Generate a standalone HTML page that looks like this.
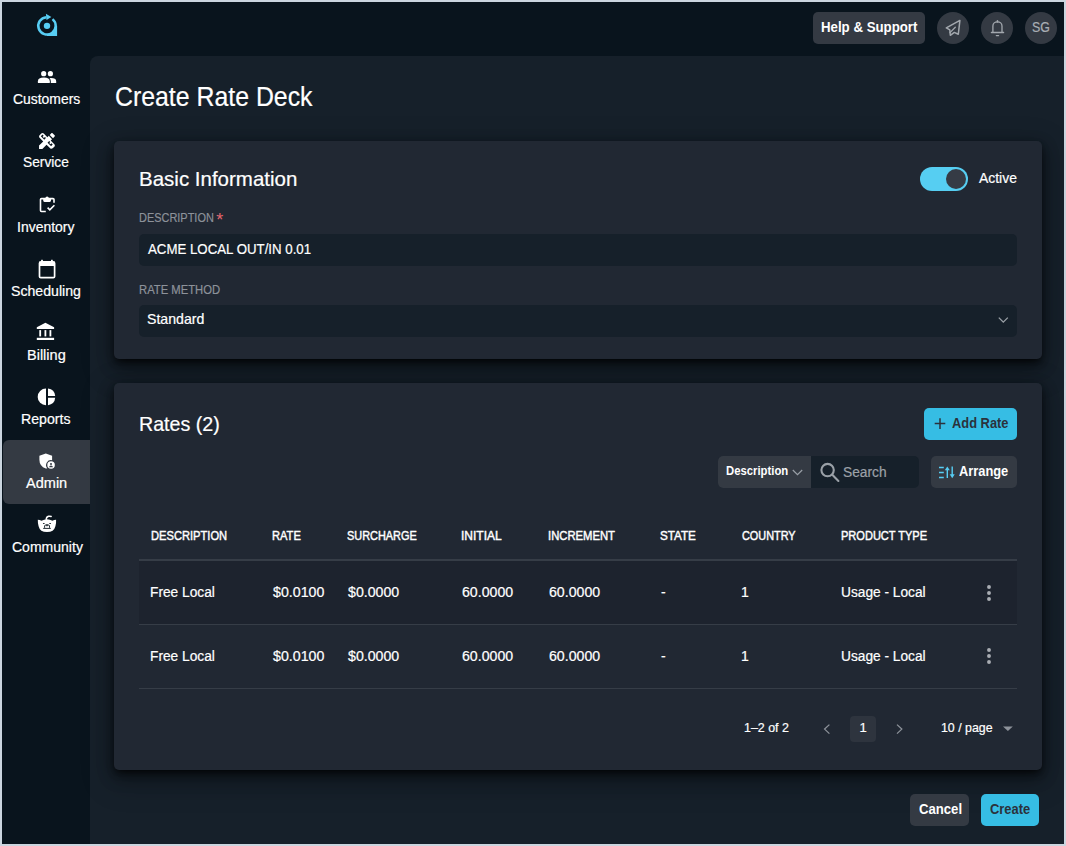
<!DOCTYPE html>
<html><head><meta charset="utf-8">
<style>
*{box-sizing:border-box;margin:0;padding:0}
html,body{width:1066px;height:846px;overflow:hidden;background:#cbd5df;font-family:"Liberation Sans",sans-serif;color:#fff;position:relative}
.r{position:absolute}
.t{position:absolute;white-space:pre;line-height:1;transform-origin:0 0}
svg{position:absolute;overflow:visible}

</style></head><body>
<div class="r" style="left:2px;top:2px;width:1062px;height:842px;background:#09141d"></div>
<div class="r" style="left:90px;top:56px;width:974px;height:788px;background:#16202a;border-top-left-radius:8px"></div>
<!-- sidebar active -->
<div class="r" style="left:3px;top:440px;width:87px;height:64px;background:#343a43;border-radius:6px 0 0 6px"></div>
<!-- top bar -->
<div class="r" style="left:813px;top:12px;width:112px;height:32px;background:#343a43;border-radius:5px"></div>
<div class="r" style="left:937px;top:12px;width:32px;height:32px;background:#343a43;border-radius:50%"></div>
<div class="r" style="left:981px;top:12px;width:32px;height:32px;background:#343a43;border-radius:50%"></div>
<div class="r" style="left:1025px;top:12px;width:32px;height:32px;background:#343a43;border-radius:50%"></div>
<!-- card 1 -->
<div class="r" style="left:114px;top:141px;width:928px;height:218px;background:#212833;border-radius:5px;box-shadow:0 3px 6px -4px rgba(0,0,0,.9),0 4px 8px -2px rgba(0,0,0,.45),0 6px 16px 0 rgba(0,0,0,.45),0 9px 28px 8px rgba(0,0,0,.16)"></div>
<div class="r" style="left:139px;top:234px;width:878px;height:32px;background:#16202a;border-radius:5px"></div>
<div class="r" style="left:139px;top:305px;width:878px;height:32px;background:#16202a;border-radius:5px"></div>
<div class="r" style="left:920px;top:167px;width:48px;height:24px;background:#56cef2;border-radius:12px"></div>
<div class="r" style="left:946px;top:169px;width:20px;height:20px;background:#353b45;border-radius:50%"></div>
<!-- card 2 -->
<div class="r" style="left:114px;top:383px;width:928px;height:387px;background:#212833;border-radius:5px;box-shadow:0 3px 6px -4px rgba(0,0,0,.9),0 4px 8px -2px rgba(0,0,0,.45),0 6px 16px 0 rgba(0,0,0,.45),0 9px 28px 8px rgba(0,0,0,.16)"></div>
<div class="r" style="left:924px;top:408px;width:93px;height:32px;background:#36bde4;border-radius:5px"></div>
<div class="r" style="left:718px;top:456px;width:201px;height:32px;background:#16202a;border-radius:5px;overflow:hidden"><div class="r" style="left:0;top:0;width:93px;height:32px;background:#343a43"></div></div>
<div class="r" style="left:931px;top:456px;width:86px;height:32px;background:#343a43;border-radius:5px"></div>
<div class="r" style="left:139px;top:559px;width:878px;height:2px;background:#363d47"></div>
<div class="r" style="left:139px;top:561px;width:878px;height:63px;background:#1d232e"></div>
<div class="r" style="left:139px;top:624px;width:878px;height:1px;background:#363d47"></div>
<div class="r" style="left:139px;top:688px;width:878px;height:1px;background:#363d47"></div>
<div class="r" style="left:850px;top:716px;width:26px;height:26px;background:#2e343e;border-radius:4px"></div>
<!-- footer buttons -->
<div class="r" style="left:910px;top:794px;width:59px;height:32px;background:#343a43;border-radius:5px"></div>
<div class="r" style="left:981px;top:794px;width:58px;height:32px;background:#36bde4;border-radius:5px"></div>
<svg style="left:0;top:0" width="1066" height="846" viewBox="0 0 1066 846">
<!-- logo -->
<g fill="#57cdf3" stroke="none">
  <path d="M52.5,19.1 A8.7,8.7 0 1,1 46.4,17.15" fill="none" stroke="#57cdf3" stroke-width="2.5"/>
  <path d="M47,36.0 L57.1,36.0 L57.1,25.85 L55.5,25.85 A8.5,8.5 0 0,1 47,34.35 Z"/>
  <path d="M45.9,13.7 L51.4,17.0 L46.5,20.1 Z"/>
  <circle cx="47" cy="25.85" r="3.2"/>
</g>
<!-- top bar icons -->
<g fill="none" stroke="#a3a8ae" stroke-width="1.3" stroke-linejoin="round" stroke-linecap="round">
  <path d="M959.9,20.4 L946.3,27.9 L949.8,29.8 L950.3,35.3 L954.3,32.4 L958.3,34.3 Z" stroke-width="1.5"/>
  <path d="M955.3,27.3 L950.0,32.6"/>
  <path d="M992.9,31.9 V26 A4.55,4.1 0 0,1 1002.0,26 V31.9 M991.4,32.5 H1003.6"/>
  <path d="M997.45,22 V20.8" stroke-width="1.6"/>
  <path d="M996.3,35.6 H998.6" stroke-width="1.2"/>
</g>
<!-- sidebar icons -->
<g fill="#ffffff" stroke="none">
  <!-- customers -->
  <circle cx="43.7" cy="73.7" r="2.6"/>
  <circle cx="50.4" cy="73.7" r="2.6"/>
  <path d="M37.9,83 V81.2 Q37.9,77.6 43.85,77.6 Q49.8,77.6 49.8,81.2 V83 Z"/>
  <path d="M50.8,83 V81.2 Q50.8,79.4 49.5,78.2 Q50.2,78.1 50.9,78.1 Q56.2,78.1 56.2,81.2 V83 Z"/>
  <!-- service: design_services -->
  <g transform="translate(36.4,130.4) scale(0.88)">
   <path d="M16.24 11.51l1.57-1.57-3.75-3.75-1.57 1.56-4.14-4.13c-.78-.78-2.05-.78-2.83 0l-1.9 1.9c-.78.78-.78 2.05 0 2.83l4.13 4.13L3 17.25V21h3.75l4.76-4.76 4.13 4.13c.95.95 2.23.6 2.83 0l1.9-1.9c.78-.78.78-2.05 0-2.83l-4.13-4.13zm-7-.6L5.04 6.7 6.95 4.79l1.33 1.32-1.18 1.19 1.41 1.41 1.19-1.19 1.2 1.2-1.65 1.39zm7.55 7.17l-4.13-4.13 1.9-1.9 1.2 1.2-1.19 1.19 1.41 1.41 1.19-1.19 1.32 1.32-1.9 1.9zM20.71 7.04a.996.996 0 000-1.41l-2.34-2.34c-.47-.47-1.12-.29-1.41 0l-1.83 1.83 3.75 3.75 1.83-1.83z"/>
  </g>
  <!-- inventory -->
  <path d="M54.0,202.8 V199.6 Q54,198.6 53,198.6 H41.5 Q40.5,198.6 40.5,199.6 V210.5 Q40.5,211.5 41.5,211.5 H45.8" fill="none" stroke="#fff" stroke-width="1.6"/>
  <path d="M43.2,198.2 H45.4 A1.7,1.7 0 0,1 48.8,198.2 H51 V200.6 Q51,201.9 49.7,201.9 H44.5 Q43.2,201.9 43.2,200.6 Z"/>
  <path d="M47.6,207.6 L49.8,209.8 L54.4,205.2" fill="none" stroke="#fff" stroke-width="1.6"/>
  <!-- scheduling -->
  <path d="M39.5,263.3 Q39.5,261.8 41,261.8 H53.1 Q54.6,261.8 54.6,263.3 V276.5 Q54.6,277.6 53.3,277.6 H40.8 Q39.5,277.6 39.5,276.5 Z" fill="none" stroke="#fff" stroke-width="1.7"/>
  <rect x="39" y="261.8" width="16" height="4.2"/>
  <rect x="41.1" y="259.8" width="1.8" height="2.5"/>
  <rect x="51.0" y="259.8" width="1.8" height="2.5"/>
  <!-- billing -->
  <path d="M45.4,322.8 L54.1,327.3 V329.1 H36.8 V327.3 Z"/>
  <rect x="39.3" y="330.1" width="1.8" height="6.3"/>
  <rect x="44.5" y="330.1" width="1.8" height="6.3"/>
  <rect x="49.5" y="330.1" width="1.8" height="6.3"/>
  <rect x="36.8" y="337.8" width="17.3" height="2.2"/>
  <!-- reports -->
  <path d="M46,388.6 A8.3,8.3 0 0,0 46,405.2 Z"/>
  <path d="M48,388.6 A8.3,8.3 0 0,1 55.2,396 H48 Z"/>
  <path d="M48,405.2 A8.3,8.3 0 0,0 55.2,397.8 H48 Z"/>
  <!-- admin -->
  <path d="M45.8,453.4 L52.1,455.8 V460.2 A5.0,5.0 0 0,0 47.25,468.3 Q46.5,468.5 45.8,468.6 Q39.4,466.3 39.4,459.8 V455.8 Z"/>
  <circle cx="51.05" cy="465.05" r="3.75"/>
  <circle cx="51.0" cy="463.9" r="1.0" fill="#343a43"/>
  <path d="M49.1,467.2 Q49.3,465.6 51,465.6 Q52.8,465.6 52.9,467.2 Z" fill="#343a43"/>
  <!-- community -->
  <path d="M37.8,519.8 Q39.8,519.9 41.5,520.8 Q44,519.2 47,519.2 Q50,519.2 52.4,520.7 Q54.1,519.9 56.1,519.8 Q56.3,523.2 55.4,526.2 Q54,532.1 47,532.1 Q40,532.1 38.6,526.2 Q37.7,523.2 37.8,519.8 Z"/>
  <path d="M46.2,519.6 Q46.2,516.9 48.6,516.3 Q50,516 51.2,516.5" fill="none" stroke="#fff" stroke-width="1.4" stroke-linecap="round"/>
  <ellipse cx="43.8" cy="523.5" rx="0.95" ry="0.55" fill="#09141d"/>
  <ellipse cx="50.1" cy="523.5" rx="0.95" ry="0.55" fill="#09141d"/>
  <path d="M44.6,527.8 V526 Q44.6,524.7 47,524.7 Q49.5,524.7 49.5,526 V527.8" fill="none" stroke="#09141d" stroke-width="0.9"/>
  <circle cx="47" cy="525.6" r="0.8" fill="#09141d"/>
  <path d="M43.2,528.4 H50.8" stroke="#09141d" stroke-width="0.9"/>
</g>
<!-- card icons -->
<path d="M998.8,317.6 L1003.3,322.1 L1007.8,317.6" fill="none" stroke="#9aa0a7" stroke-width="1.3"/>
<g fill="none" stroke="#2b323c" stroke-width="1.5"><path d="M940,418.3 V429 M934.7,423.6 H945.3"/></g>
<path d="M792.8,470 L797.5,474.6 L802.2,470" fill="none" stroke="#9aa0a7" stroke-width="1.2"/>
<g fill="none" stroke="#9aa0a7" stroke-width="2.1" stroke-linecap="round"><circle cx="827.6" cy="470.1" r="6.2"/><path d="M832.3,474.8 L838.4,480.9"/></g>
<!-- arrange icon -->
<g stroke="#57cdf3" stroke-width="1.4" fill="#57cdf3">
  <path d="M939,467.5 H943.8 M939,472.5 H943.8 M939,477.5 H943.8" fill="none"/>
  <path d="M947.3,478 V469" fill="none"/><path d="M944.8,470.3 L947.3,466.5 L949.8,470.3 Z" stroke="none"/>
  <path d="M952.2,466.5 V475" fill="none"/><path d="M949.7,474.2 L952.2,478.2 L954.7,474.2 Z" stroke="none"/>
</g>
<!-- kebab -->
<g fill="#a9adb3">
  <circle cx="989" cy="587" r="1.95"/><circle cx="989" cy="593" r="1.95"/><circle cx="989" cy="599" r="1.95"/>
  <circle cx="989" cy="650" r="1.95"/><circle cx="989" cy="656" r="1.95"/><circle cx="989" cy="662" r="1.95"/>
</g>
<!-- pagination -->
<path d="M829.4,724.6 L824.6,729.1 L829.4,733.6" fill="none" stroke="#8d929a" stroke-width="1.3"/>
<path d="M897,724.6 L901.8,729.1 L897,733.6" fill="none" stroke="#8d929a" stroke-width="1.3"/>
<path d="M1003,726.4 H1012.8 L1007.9,731 Z" fill="#8d929a"/>
<!-- asterisk -->
<text x="216.2" y="226.2" font-family="Liberation Sans" font-size="18" fill="#e2676f">*</text>
</svg>

<div class="t" style="left:115.10px;top:82.52px;font-size:27.5px;font-weight:400;color:#ffffff;transform:scaleX(0.9037);-webkit-text-stroke:0.2px #ffffff">Create Rate Deck</div>
<div class="t" style="left:138.70px;top:168.66px;font-size:20.6px;font-weight:400;color:#ffffff;transform:scaleX(0.9955);-webkit-text-stroke:0.2px #ffffff">Basic Information</div>
<div class="t" style="left:138.79px;top:210.87px;font-size:13.5px;font-weight:400;color:#8d929a;transform:scaleX(0.8110);-webkit-text-stroke:0.2px #8d929a">DESCRIPTION</div>
<div class="t" style="left:148.30px;top:241.61px;font-size:14.4px;font-weight:400;color:#ffffff;transform:scaleX(0.9215);-webkit-text-stroke:0.2px #ffffff">ACME LOCAL OUT/IN 0.01</div>
<div class="t" style="left:138.53px;top:283.30px;font-size:13px;font-weight:400;color:#8d929a;transform:scaleX(0.8663);-webkit-text-stroke:0.2px #8d929a">RATE METHOD</div>
<div class="t" style="left:147.23px;top:312.43px;font-size:14.5px;font-weight:400;color:#ffffff;transform:scaleX(0.9737);-webkit-text-stroke:0.2px #ffffff">Standard</div>
<div class="t" style="left:978.90px;top:170.75px;font-size:14px;font-weight:400;color:#ffffff;transform:scaleX(0.9947);-webkit-text-stroke:0.2px #ffffff">Active</div>
<div class="t" style="left:138.85px;top:413.56px;font-size:20.6px;font-weight:400;color:#ffffff;transform:scaleX(0.9542);-webkit-text-stroke:0.2px #ffffff">Rates (2)</div>
<div class="t" style="left:952.00px;top:416.15px;font-size:14px;font-weight:700;color:#2b323c;transform:scaleX(0.9194)">Add Rate</div>
<div class="t" style="left:959.30px;top:463.75px;font-size:14px;font-weight:700;color:#ffffff;transform:scaleX(0.9167)">Arrange</div>
<div class="t" style="left:725.63px;top:464.20px;font-size:13px;font-weight:700;color:#ffffff;transform:scaleX(0.8700)">Description</div>
<div class="t" style="left:843.22px;top:464.95px;font-size:14px;font-weight:400;color:#9ca1a8;transform:scaleX(0.9837);-webkit-text-stroke:0.2px #9ca1a8">Search</div>
<div class="t" style="left:150.54px;top:529.20px;font-size:13px;font-weight:400;color:#ffffff;transform:scaleX(0.8563);-webkit-text-stroke:0.45px #ffffff">DESCRIPTION</div>
<div class="t" style="left:271.75px;top:529.20px;font-size:13px;font-weight:400;color:#ffffff;transform:scaleX(0.8545);-webkit-text-stroke:0.45px #ffffff">RATE</div>
<div class="t" style="left:346.56px;top:529.20px;font-size:13px;font-weight:400;color:#ffffff;transform:scaleX(0.8402);-webkit-text-stroke:0.45px #ffffff">SURCHARGE</div>
<div class="t" style="left:461.38px;top:529.20px;font-size:13px;font-weight:400;color:#ffffff;transform:scaleX(0.9233);-webkit-text-stroke:0.45px #ffffff">INITIAL</div>
<div class="t" style="left:547.63px;top:529.20px;font-size:13px;font-weight:400;color:#ffffff;transform:scaleX(0.8658);-webkit-text-stroke:0.45px #ffffff">INCREMENT</div>
<div class="t" style="left:660.10px;top:529.20px;font-size:13px;font-weight:400;color:#ffffff;transform:scaleX(0.8974);-webkit-text-stroke:0.45px #ffffff">STATE</div>
<div class="t" style="left:742.00px;top:529.20px;font-size:13px;font-weight:400;color:#ffffff;transform:scaleX(0.8359);-webkit-text-stroke:0.45px #ffffff">COUNTRY</div>
<div class="t" style="left:840.85px;top:529.20px;font-size:13px;font-weight:400;color:#ffffff;transform:scaleX(0.8490);-webkit-text-stroke:0.45px #ffffff">PRODUCT TYPE</div>
<div class="t" style="left:744.04px;top:721.40px;font-size:13px;font-weight:400;color:#ffffff;transform:scaleX(0.9565);-webkit-text-stroke:0.2px #ffffff">1–2 of 2</div>
<div class="t" style="left:859.60px;top:721.40px;font-size:13px;font-weight:400;color:#ffffff;transform:scaleX(1.0000);-webkit-text-stroke:0.2px #ffffff">1</div>
<div class="t" style="left:940.65px;top:721.40px;font-size:13px;font-weight:400;color:#ffffff;transform:scaleX(0.9509);-webkit-text-stroke:0.2px #ffffff">10 / page</div>
<div class="t" style="left:919.00px;top:801.95px;font-size:14px;font-weight:700;color:#ffffff;transform:scaleX(0.9378)">Cancel</div>
<div class="t" style="left:990.00px;top:801.95px;font-size:14px;font-weight:700;color:#2b323c;transform:scaleX(0.9227)">Create</div>
<div class="t" style="left:820.65px;top:19.95px;font-size:14px;font-weight:700;color:#ffffff;transform:scaleX(0.9465)">Help &amp; Support</div>
<div class="t" style="left:1031.72px;top:19.95px;font-size:14px;font-weight:400;color:#a9aeb4;transform:scaleX(0.8842);-webkit-text-stroke:0.2px #a9aeb4">SG</div>
<div class="t" style="left:12.80px;top:91.65px;font-size:14px;font-weight:400;color:#ffffff;transform:scaleX(0.9941);-webkit-text-stroke:0.2px #ffffff">Customers</div>
<div class="t" style="left:22.82px;top:155.45px;font-size:14px;font-weight:400;color:#ffffff;transform:scaleX(0.9826);-webkit-text-stroke:0.2px #ffffff">Service</div>
<div class="t" style="left:17.20px;top:219.75px;font-size:14px;font-weight:400;color:#ffffff;transform:scaleX(0.9982);-webkit-text-stroke:0.2px #ffffff">Inventory</div>
<div class="t" style="left:10.99px;top:283.55px;font-size:14px;font-weight:400;color:#ffffff;transform:scaleX(1.0088);-webkit-text-stroke:0.2px #ffffff">Scheduling</div>
<div class="t" style="left:26.86px;top:347.75px;font-size:14px;font-weight:400;color:#ffffff;transform:scaleX(1.0361);-webkit-text-stroke:0.2px #ffffff">Billing</div>
<div class="t" style="left:21.39px;top:411.75px;font-size:14px;font-weight:400;color:#ffffff;transform:scaleX(1.0104);-webkit-text-stroke:0.2px #ffffff">Reports</div>
<div class="t" style="left:26.40px;top:475.75px;font-size:14px;font-weight:400;color:#ffffff;transform:scaleX(1.0385);-webkit-text-stroke:0.2px #ffffff">Admin</div>
<div class="t" style="left:11.50px;top:540.15px;font-size:14px;font-weight:400;color:#ffffff;transform:scaleX(1.0014);-webkit-text-stroke:0.2px #ffffff">Community</div>
<div class="t" style="left:150.42px;top:584.95px;font-size:14px;font-weight:400;color:#ffffff;transform:scaleX(0.9815);-webkit-text-stroke:0.2px #ffffff">Free Local</div>
<div class="t" style="left:272.60px;top:584.95px;font-size:14px;font-weight:400;color:#ffffff;transform:scaleX(1.0140);-webkit-text-stroke:0.2px #ffffff">$0.0100</div>
<div class="t" style="left:347.70px;top:584.95px;font-size:14px;font-weight:400;color:#ffffff;transform:scaleX(1.0120);-webkit-text-stroke:0.2px #ffffff">$0.0000</div>
<div class="t" style="left:462.30px;top:584.95px;font-size:14px;font-weight:400;color:#ffffff;transform:scaleX(1.0100);-webkit-text-stroke:0.2px #ffffff">60.0000</div>
<div class="t" style="left:548.50px;top:584.95px;font-size:14px;font-weight:400;color:#ffffff;transform:scaleX(1.0100);-webkit-text-stroke:0.2px #ffffff">60.0000</div>
<div class="t" style="left:661.00px;top:584.95px;font-size:14px;font-weight:400;color:#ffffff;transform:scaleX(1.0000);-webkit-text-stroke:0.2px #ffffff">-</div>
<div class="t" style="left:741.00px;top:584.95px;font-size:14px;font-weight:400;color:#ffffff;transform:scaleX(1.0000);-webkit-text-stroke:0.2px #ffffff">1</div>
<div class="t" style="left:840.72px;top:584.95px;font-size:14px;font-weight:400;color:#ffffff;transform:scaleX(0.9800);-webkit-text-stroke:0.2px #ffffff">Usage - Local</div>
<div class="t" style="left:150.42px;top:648.95px;font-size:14px;font-weight:400;color:#ffffff;transform:scaleX(0.9815);-webkit-text-stroke:0.2px #ffffff">Free Local</div>
<div class="t" style="left:272.60px;top:648.95px;font-size:14px;font-weight:400;color:#ffffff;transform:scaleX(1.0140);-webkit-text-stroke:0.2px #ffffff">$0.0100</div>
<div class="t" style="left:347.70px;top:648.95px;font-size:14px;font-weight:400;color:#ffffff;transform:scaleX(1.0120);-webkit-text-stroke:0.2px #ffffff">$0.0000</div>
<div class="t" style="left:462.30px;top:648.95px;font-size:14px;font-weight:400;color:#ffffff;transform:scaleX(1.0100);-webkit-text-stroke:0.2px #ffffff">60.0000</div>
<div class="t" style="left:548.50px;top:648.95px;font-size:14px;font-weight:400;color:#ffffff;transform:scaleX(1.0100);-webkit-text-stroke:0.2px #ffffff">60.0000</div>
<div class="t" style="left:661.00px;top:648.95px;font-size:14px;font-weight:400;color:#ffffff;transform:scaleX(1.0000);-webkit-text-stroke:0.2px #ffffff">-</div>
<div class="t" style="left:741.00px;top:648.95px;font-size:14px;font-weight:400;color:#ffffff;transform:scaleX(1.0000);-webkit-text-stroke:0.2px #ffffff">1</div>
<div class="t" style="left:840.72px;top:648.95px;font-size:14px;font-weight:400;color:#ffffff;transform:scaleX(0.9800);-webkit-text-stroke:0.2px #ffffff">Usage - Local</div>
</body></html>
